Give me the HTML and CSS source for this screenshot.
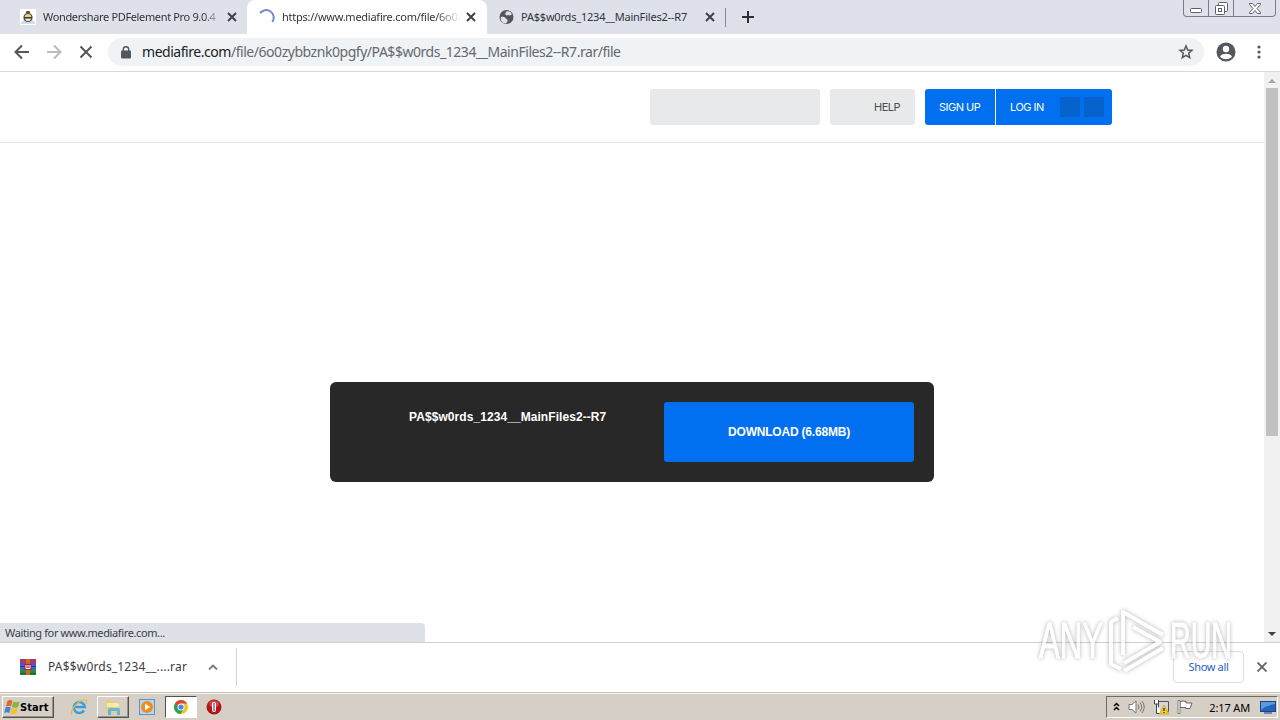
FILE: index.html
```html
<!DOCTYPE html>
<html lang="en">
<head>
    <meta charset="UTF-8">
    <meta name="viewport" content="width=device-width, initial-scale=1.0">
    <title>MediaFire</title>
    <link rel="stylesheet" href="styles.css">
</head>
<body>

    <!-- tabs -->
    <div class="tab-strip">
        <div class="tab tab-first">
            <svg class="favicon" width="16" height="16" viewBox="0 0 16 16">
                <rect width="16" height="16" fill="#fff"/>
                <path d="M1 15V13l3-2h8l3 2v2z" fill="#cfdcf3"/>
                <circle cx="8" cy="8.5" r="4" fill="#e8d27c" stroke="#444" stroke-width="1.2"/>
                <path d="M5.5 4.500L6.500 2h3l1 2.500z" fill="#555"/>
                <path d="M4 8h8v1.500H4z" fill="#333a44"/>
                <path d="M6 11h4" stroke="#fff"/>
            </svg>
            <span class="tab-title title-one">Wondershare PDFelement Pro 9.0.4</span>
            <svg class="tab-close" width="10" height="10" viewBox="0 0 10 10"><path d="M1 1l8 8M9 1L1 9"/></svg>
        </div>
        <div class="tab tab-active">
            <svg class="favicon" width="16" height="16" viewBox="0 0 16 16">
                <path d="M1 4.200A7 7 0 0 1 13.300 13" fill="none" stroke="#7389c4" stroke-width="2"/>
            </svg>
            <span class="tab-title title-two">https://www.mediafire.com/file/6o0z</span>
            <svg class="tab-close" width="10" height="10" viewBox="0 0 10 10"><path d="M1 1l8 8M9 1L1 9"/></svg>
        </div>
        <div class="tab tab-last">
            <svg class="favicon" width="16" height="16" viewBox="0 0 16 16">
                <circle cx="7.500" cy="8" r="7" fill="#54585e"/>
                <path d="M2 8c2-.5 4 0 5 1.500s2 1 1.500 2.500-1 1.500-1.500 2.500C3.500 14.500 1 11.500 2 8zM7.500 2.500c2-1 4.500.5 5.500 2.500l-2 1.500-2-.5L7.500 6.500 6 5z" fill="#dee1e9"/>
            </svg>
            <span class="tab-title title-three">PA$$w0rds_1234__MainFiles2--R7</span>
            <svg class="tab-close" width="10" height="10" viewBox="0 0 10 10"><path d="M1 1l8 8M9 1L1 9"/></svg>
        </div>
        <svg class="new-tab" width="12" height="12" viewBox="0 0 12 12"><path d="M6 0v12M0 6h12" stroke="#2c2f36" stroke-width="2"/></svg>
        <div class="window-buttons">
            <span class="win-min"><svg width="12" height="5" viewBox="0 0 12 5"><rect x=".5" y=".5" width="11" height="4" rx="1"/></svg></span>
            <span class="win-max"><svg width="13" height="13" viewBox="0 0 13 13"><rect x="3.500" y=".5" width="9" height="9" rx="1"/><rect x=".5" y="3.500" width="9" height="9" rx="1"/><rect x="3.500" y="6.500" width="3" height="3"/></svg></span>
            <span class="win-close"><svg width="12" height="11" viewBox="0 0 12 11"><path d="M.5.5h3L6 3.500 8.500.5h3v1L8 5.500l3.500 4v1h-3L6 7.500l-2.500 3h-3v-1L4 5.500.5 1.500z"/></svg></span>
        </div>
    </div>

    <!-- toolbar -->
    <div class="toolbar">
        <svg class="nav-icon" width="16" height="16" viewBox="0 0 16 16"><path d="M15 8H2M8 1.500L1.500 8 8 14.500" stroke="#54575b"/></svg>
        <svg class="nav-icon" width="16" height="16" viewBox="0 0 16 16"><path d="M1 8h13M8 1.500L14.500 8 8 14.500" stroke="#b9bbbf"/></svg>
        <svg class="nav-icon" width="16" height="16" viewBox="0 0 16 16"><path d="M2.500 2.500l11 11M13.500 2.500l-11 11" stroke="#54575b"/></svg>
        <div class="address-bar">
            <svg width="10" height="13" viewBox="0 0 10 13"><rect y="4.500" width="10" height="8" rx="1" fill="#54575b"/><path d="M2.300 5V3.500a2.700 2.700 0 0 1 5.400 0V5" fill="none" stroke="#54575b" stroke-width="1.400"/></svg>
            <span class="url"><b>mediafire.com</b>/file/6o0zybbznk0pgfy/PA$$w0rds_1234__MainFiles2--R7.rar/file</span>
            <svg class="star" width="16" height="16" viewBox="0 0 16 16"><path d="M8 2l1.700 4 4.300.4-3.300 2.900 1 4.300L8 11.400l-3.700 2.200 1-4.300L2 6.400 6.300 6z" fill="none" stroke="#54575b" stroke-width="1.500"/></svg>
        </div>
        <svg class="profile" width="20" height="20" viewBox="0 0 20 20"><circle cx="10" cy="10" r="9.500" fill="#54575b"/><circle cx="10" cy="7" r="3.200" fill="#fff"/><path d="M4 14.500c1-2 4-2.700 6-2.700s5 .7 6 2.700c-1.400 1.800-3.600 2.700-6 2.700s-4.600-.9-6-2.700z" fill="#fff"/></svg>
        <svg class="menu" width="4" height="14" viewBox="0 0 4 14" fill="#54575b"><circle cx="2" cy="2" r="1.600"/><circle cx="2" cy="7" r="1.600"/><circle cx="2" cy="12" r="1.600"/></svg>
    </div>

    <!-- page -->
    <div class="viewport">
        <div class="page">
            <header class="site-header">
                <div class="search-box"></div>
                <div class="help-button">HELP</div>
                <div class="account">
                    <span class="sign-up">SIGN UP</span>
                    <span class="log-in">LOG IN <i></i><i></i></span>
                </div>
            </header>
            <div class="download-card">
                <div class="file-name">PA$$w0rds_1234__MainFiles2--R7</div>
                <div class="download-button"><span>DOWNLOAD (6.68MB)</span></div>
            </div>
        </div>
        <div class="scrollbar">
            <svg width="8" height="4" viewBox="0 0 8 4"><path d="M0 4l4-4 4 4z" fill="#a3a3a3"/></svg>
            <div class="thumb"></div>
            <svg class="arrow-down" width="8" height="4" viewBox="0 0 8 4"><path d="M0 0l4 4 4-4z" fill="#404040"/></svg>
        </div>
        <div class="status"><span>Waiting for www.mediafire.com...</span></div>
    </div>

    <!-- downloads -->
    <div class="download-shelf">
        <div class="shelf-item">
            <svg width="16" height="16" viewBox="0 0 16 16">
                <rect width="16" height="5" fill="#8a3fa0"/><rect y="1" width="16" height="2" fill="#c0354a"/>
                <rect y="5" width="16" height="6" fill="#3765c8"/><rect y="7" width="16" height="1" fill="#203c86"/>
                <rect y="11" width="16" height="5" fill="#2b8a3c"/><rect y="14" width="16" height="1" fill="#15602a"/>
                <rect x="6" width="4" height="16" fill="#c96c22"/>
                <rect x="4.500" y="5" width="7" height="6" fill="#a3243b"/><path d="M6 6v3.500h4V6M8 6v2.500" fill="none" stroke="#fff"/>
            </svg>
            <span class="shelf-name">PA$$w0rds_1234__....rar</span>
            <svg class="chevron" width="10" height="6" viewBox="0 0 10 6"><path d="M1 5.500L5 1.500l4 4" fill="none" stroke="#777" stroke-width="1.800"/></svg>
        </div>
        <div class="show-all"><span>Show all</span></div>
        <svg class="shelf-close" width="10" height="10" viewBox="0 0 10 10"><path d="M.5.5l9 9M9.500.5l-9 9" stroke="#5f6368" stroke-width="1.800"/></svg>
    </div>

    <!-- taskbar -->
    <div class="taskbar">
        <div class="start">
            <svg width="16" height="16" viewBox="0 0 16 16">
                <path d="M3.500 2c2-1.500 3.500-1 5 0L7 7.500c-1.500-1-3-1-5 0z" fill="#e8622c"/>
                <path d="M9.500 2.500c1.500 1 3.500 1 6 0L14 8c-2 1-4 1-6 0z" fill="#7cb83a"/>
                <path d="M1.500 8.500c2-1.200 3.500-1 5.200 0L5.300 14c-1.500-1-3-1-5 0z" fill="#3f86d6"/>
                <path d="M7.700 9c1.500 1 3.500 1 6 0l-1.500 5.500c-2 1-4 1-6 0z" fill="#f5bf2e"/>
            </svg>
            <span>Start</span>
        </div>
        <div class="task">
            <svg width="18" height="18" viewBox="0 0 18 18"><path d="M14 12.500a5.500 5.500 0 1 1 .8-3.500H5" fill="none" stroke="#38a0e0" stroke-width="2.500"/><path d="M2 16.500C-1 15 6 4.500 12 2.500s5 0 4 3" fill="none" stroke="#e8b93a" stroke-width="1.200"/></svg>
        </div>
        <div class="task task-raised">
            <svg width="18" height="18" viewBox="0 0 18 18"><path d="M2 3l5-1 1 2h7v11H2z" fill="#e8cd72"/><path d="M3 5h12v4H3z" fill="#f8eaaf"/><path d="M4 17v-5q0-2 2-2h8q2 0 2 2v5h-3v-4H7v4z" fill="#65b6df"/></svg>
        </div>
        <div class="task">
            <svg width="18" height="18" viewBox="0 0 18 18"><rect x="1.500" y="1.500" width="15" height="15" fill="#b4d8f2" stroke="#5794c7"/><circle cx="9" cy="9" r="6" fill="#f28a1c"/><path d="M7 5.500l5 3.500-5 3.500z" fill="#fff"/></svg>
        </div>
        <div class="task task-pressed">
            <svg width="16" height="16" viewBox="0 0 16 16"><circle cx="8" cy="8" r="7" fill="#f2c31c"/><path d="M1.900 4.500A7 7 0 0 1 14.100 4.500H8L4.800 9.500z" fill="#dc4437"/><path d="M1.900 4.500A7 7 0 0 0 7.500 15l3.400-5.300L8 11z" fill="#2ba24c"/><circle cx="8" cy="8" r="3.500" fill="#fff"/><circle cx="8" cy="8" r="2.600" fill="#4285f4"/></svg>
        </div>
        <div class="task task-opera">
            <svg width="16" height="16" viewBox="0 0 16 16"><circle cx="8" cy="8" r="7.500" fill="#b3141c"/><ellipse cx="8" cy="5" rx="5" ry="3.500" fill="#d3464b"/><rect x="6" y="3" width="4" height="10" rx="2" fill="#fff"/><rect x="7.500" y="4" width="1" height="8" fill="#8a1014"/></svg>
        </div>
        <div class="tray">
            <svg width="7" height="10" viewBox="0 0 7 10"><path d="M1 4l2.500-2.500L6 4M1 8l2.500-2.500L6 8" fill="none" stroke="#000" stroke-width="1.500"/></svg>
            <svg class="speaker" width="17" height="16" viewBox="0 0 17 16" fill="none" stroke="#777"><path d="M1 5.500h3L8 2v12l-4-3.500H1z" fill="#fff"/><path d="M10 5.500q2 2.500 0 5M12 3.500q3.500 4.500 0 9M14 2q4.500 6 0 12"/></svg>
            <svg class="network" width="16" height="16" viewBox="0 0 16 16"><path d="M5.500 2.500h10v10h-10z" fill="#d5d5d5" stroke="#555"/><path d="M1.500 1v4h4V1M3.500 5v9.500H9" fill="#fff" stroke="#444"/><path d="M11 6l4.800 9H6.500z" fill="#f6cf20" stroke="#b89512" stroke-width=".6"/><path d="M11 9v3M11 13v1" stroke="#222" stroke-width="1.200"/></svg>
            <svg class="flag" width="16" height="16" viewBox="0 0 16 16"><path d="M3 2.500q3-.8 6 0v1.500h6l-2 5.500H8.500V8.500H3z" fill="#fff" stroke="#666"/><path d="M1 1.500h2v13H1z" fill="#fff" stroke="#666" stroke-width=".8"/></svg>
            <span class="clock">2:17 AM</span>
            <svg class="desktop" width="16" height="14" viewBox="0 0 16 14"><rect x=".5" y="1.500" width="15" height="10" fill="#2365bd" stroke="#1c447e"/><path d="M1 2h14v2Q7 5 1 10z" fill="#5b9be4"/><path d="M4 13h8" stroke="#6c89ab" stroke-width="2"/></svg>
        </div>
    </div>

    <svg class="watermark" width="200" height="70" viewBox="0 0 200 70">
        <text x="3" y="52" textLength="64" lengthAdjust="spacingAndGlyphs">ANY</text>
        <path d="M82 12L75 16V58L85 63M87 49V6L127 29M87 16V6M97 21L124 36L88 57M127 42L88 65"/>
        <text x="134" y="52" textLength="62" lengthAdjust="spacingAndGlyphs">RUN</text>
    </svg>

</body>
</html>
```
FILE: styles.css
```css
* {
    box-sizing: border-box;
}

body {
    margin: 0;
    width: 1280px;
    height: 720px;
    overflow: hidden;
    position: relative;
    display: flex;
    flex-direction: column;
    background: #fff;
    font-family: "Noto Sans", sans-serif;
    font-size: 11px;
    color: #3c4043;
}

svg {
    display: block;
    flex: none;
}

/* --- tabs --- */
.tab-strip {
    height: 34px;
    flex: none;
    display: flex;
    background: #dee1e9;
}

.tab {
    width: 240px;
    height: 34px;
    padding: 0 11px 0 12px;
    display: flex;
    align-items: center;
}

.tab-first {
    width: 247px;
    padding-left: 20px;
    padding-right: 10px;
}

.tab-first,
.tab-last {
    position: relative;
}

.tab-last {
    width: 239px;
}

.tab-last::after {
    content: "";
    position: absolute;
    right: 0;
    top: 8px;
    width: 1px;
    height: 19px;
    background: #858991;
}

.tab-active {
    background: #fff;
    border-radius: 8px 8px 0 0;
}

.tab-title {
    margin-left: 7px;
    width: 178px;
    overflow: hidden;
    white-space: nowrap;
    color: #30343a;
    line-height: 18px;
}

.title-one {
    letter-spacing: -0.35px;
    -webkit-mask-image: linear-gradient(to right, #000 160px, rgba(0,0,0,0.3) 174px);
}

.title-two {
    letter-spacing: -0.25px;
    -webkit-mask-image: linear-gradient(to right, #000 155px, transparent 178px);
}

.title-three {
    margin-left: 6px;
    letter-spacing: -0.2px;
}

.tab-close {
    margin-left: auto;
    fill: none;
    stroke: #3d4148;
    stroke-width: 2;
}

.new-tab {
    margin: 11px 0 0 16px;
}

.window-buttons {
    margin: 0 4px 0 auto;
    width: 93px;
    height: 17px;
    display: flex;
    border: 1px solid #797d86;
    border-top: 0;
    border-radius: 0 0 4px 4px;
}

.window-buttons span {
    display: flex;
    justify-content: center;
    align-items: center;
    border-right: 1px solid #797d86;
}

.window-buttons svg {
    fill: #fff;
    stroke: #5c5f68;
}

.win-min {
    width: 25px;
    padding-top: 5px;
}

.win-max {
    width: 25px;
}

.window-buttons .win-close {
    flex: 1;
    border-right: 0;
}

/* --- toolbar --- */
.toolbar {
    height: 38px;
    flex: none;
    display: flex;
    align-items: center;
    padding: 0 19px 1px 14px;
    border-bottom: 1px solid #d8d9dc;
}

.nav-icon {
    margin-right: 16px;
    fill: none;
    stroke-width: 2;
}

.address-bar {
    margin-left: -2px;
    width: 1096px;
    height: 28px;
    padding: 0 10px 0 13px;
    display: flex;
    align-items: center;
    border-radius: 14px;
    background: #f0f3f6;
}

.url {
    margin-left: 11px;
    padding-bottom: 2px;
    font-size: 14px;
    letter-spacing: -0.46px;
    white-space: nowrap;
    color: #64686d;
}

.url b {
    font-weight: normal;
    color: #202124;
}

.star {
    margin-left: auto;
}

.profile {
    margin-left: 12px;
}

.menu {
    margin-left: auto;
}

/* --- page --- */
.viewport {
    height: 570px;
    flex: none;
    display: flex;
    position: relative;
}

.page {
    width: 1264px;
}

.site-header {
    height: 71px;
    padding: 17px 152px 0 0;
    display: flex;
    justify-content: flex-end;
    gap: 10px;
    border-bottom: 1px solid #e4e5e7;
    font-family: Inter, sans-serif;
    font-size: 11px;
}

.search-box,
.help-button {
    width: 170px;
    height: 36px;
    border-radius: 3px;
    background: #e8e9eb;
}

.help-button {
    width: 85px;
    padding-right: 15px;
    line-height: 36px;
    text-align: right;
    color: #4a4d54;
    letter-spacing: -0.5px;
}

.account {
    width: 187px;
    height: 36px;
    display: flex;
    border-radius: 3px;
    background: #0070f0;
    color: #fff;
    line-height: 36px;
    letter-spacing: -0.5px;
}

.sign-up {
    width: 71px;
    padding-left: 14px;
    border-right: 1px solid #fff;
}

.log-in {
    flex: 1;
    padding: 0 8px 0 14px;
    display: flex;
    align-items: center;
    gap: 4px;
}

.log-in i {
    width: 20px;
    height: 20px;
    background: #0662cd;
}

.log-in i:first-of-type {
    margin-left: auto;
}

.download-card {
    width: 604px;
    height: 100px;
    margin: 239px 0 0 330px;
    padding: 20px;
    display: flex;
    justify-content: space-between;
    border-radius: 6px;
    background: #282828;
    color: #fff;
    font-family: "Liberation Sans", sans-serif;
    font-weight: bold;
    font-size: 12px;
}

.file-name {
    padding: 8px 0 0 59px;
    line-height: 14px;
    letter-spacing: 0.07px;
}

.download-button {
    width: 250px;
    height: 60px;
    border-radius: 3px;
    background: #0070f0;
    line-height: 60px;
    text-align: center;
    letter-spacing: -0.2px;
}

.scrollbar {
    width: 16px;
    padding: 7px 0 6px;
    display: flex;
    flex-direction: column;
    align-items: center;
    background: #f1f1f1;
}

.thumb {
    width: 12px;
    height: 348px;
    margin-top: 5px;
    background: #c1c1c1;
}

.arrow-down {
    margin-top: auto;
}

.status {
    position: absolute;
    left: 0;
    bottom: 0;
    width: 425px;
    height: 19px;
    padding-left: 5px;
    border-radius: 0 4px 0 0;
    background: #dee1e7;
    line-height: 19px;
    letter-spacing: -0.38px;
}

/* --- downloads --- */
.download-shelf {
    height: 50px;
    flex: none;
    display: flex;
    align-items: center;
    padding: 0 13px 2px 0;
    border-top: 1px solid #cfd0d3;
    background: #fff;
}

.shelf-item {
    width: 237px;
    height: 38px;
    padding: 0 18px 0 20px;
    display: flex;
    align-items: center;
    border-right: 1px solid #d0d1d4;
}

.shelf-name {
    margin-left: 12px;
    font-size: 12px;
    letter-spacing: 0.18px;
}

.chevron {
    margin-left: auto;
}

.show-all {
    width: 71px;
    height: 32px;
    margin-left: auto;
    border: 1px solid #dadce0;
    border-radius: 4px;
    line-height: 30px;
    text-align: center;
    color: #1c62c4;
    letter-spacing: -0.35px;
}

.shelf-close {
    margin-left: 13px;
}

/* --- taskbar --- */
.taskbar {
    height: 28px;
    flex: none;
    display: flex;
    align-items: center;
    padding: 1px 2px 0;
    border-top: 1px solid #c4c1bb;
    background: #d5cfc6;
    box-shadow: inset 0 1px #f4f2ee;
    color: #000;
}

.start,
.task-raised {
    border: 1px solid;
    border-color: #fff #55524d #55524d #fff;
    box-shadow: inset -1px -1px #99948b;
}

.start {
    width: 52px;
    height: 22px;
    padding-left: 1px;
    margin-right: 9px;
    display: flex;
    align-items: center;
    font-family: "DejaVu Sans Condensed", "DejaVu Sans", sans-serif;
    font-weight: bold;
    font-size: 11px;
    letter-spacing: 0.1px;
}

.task {
    width: 32px;
    height: 22px;
    margin-right: 2px;
    display: flex;
    align-items: center;
    justify-content: center;
}

.task-pressed {
    border: 1px solid;
    border-color: #55524d #fff #fff #55524d;
    background: #fff;
}

.task-opera {
    margin-left: -1px;
}

.tray {
    width: 172px;
    height: 22px;
    margin-left: auto;
    padding-left: 6px;
    display: flex;
    align-items: center;
    border: 1px solid;
    border-color: #6f6b65 #fff #fff #6f6b65;
}

.speaker,
.network,
.flag {
    margin-left: 8px;
}

.clock {
    margin-left: auto;
    letter-spacing: -0.15px;
}

.desktop {
    margin: 0 1px 0 10px;
}

/* --- watermark --- */
.watermark {
    position: absolute;
    left: 1036px;
    top: 606px;
    overflow: visible;
    font-family: "Liberation Sans", sans-serif;
    font-size: 50px;
    fill: #fff;
    stroke: #fff;
    stroke-width: 1;
    opacity: 0.75;
    filter: drop-shadow(0 0 2px rgba(90, 90, 90, 0.5)) drop-shadow(0 0 1px rgba(90, 90, 90, 0.15));
}

.watermark path {
    fill: none;
    stroke-width: 4;
    stroke-linejoin: round;
}
```
